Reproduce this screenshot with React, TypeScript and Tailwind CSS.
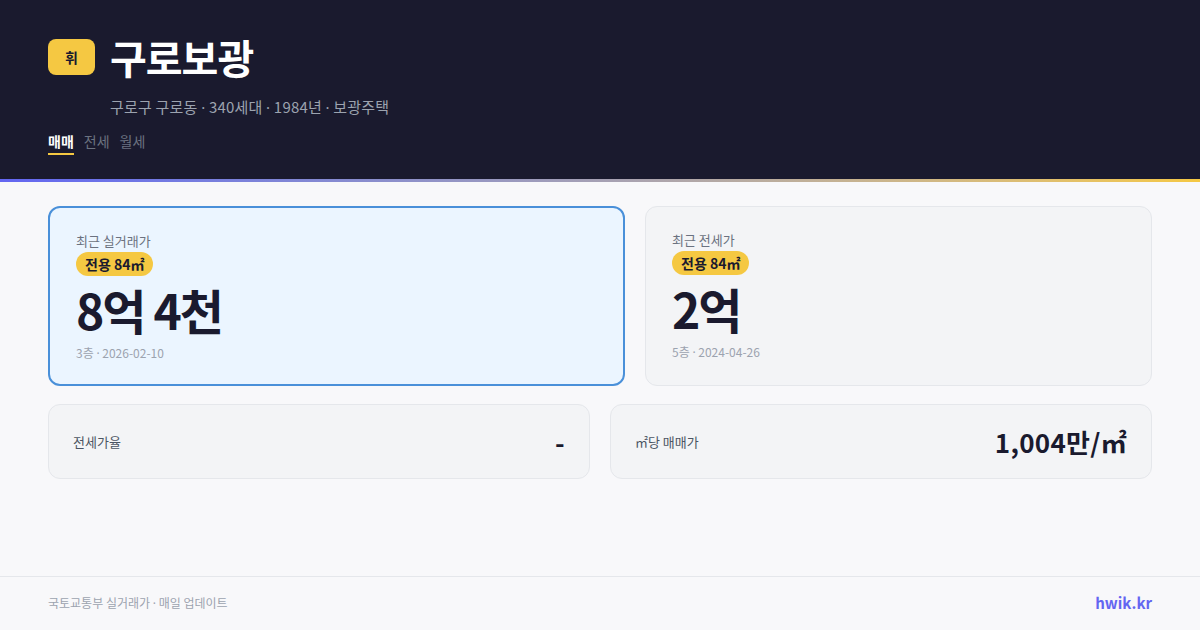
import React from 'react';

const font = { fontFamily: '"Noto Sans CJK KR", "Noto Sans", sans-serif' };

// Latin middle dot so the separator keeps its narrow width
const Dot = () => <span style={{ fontFamily: '"Noto Sans", sans-serif' }}>·</span>;

const PriceCard = ({ label, area, price, meta, active }: { label: string; area: string; price: string; meta: React.ReactNode; active?: boolean }) => (
  <div
    className={`rounded-xl px-[26px] pt-[24px] pb-[22px] ${
      active ? 'bg-[#ebf5ff] border-2 border-[#4a90d9]' : 'bg-[#f3f4f6] border border-[#e5e7eb]'
    }`}
  >
    <div className="text-[13px] text-[#6b7280] leading-[18px]">{label}</div>
    <div className="mt-[2px] inline-flex items-center h-6 px-[9px] rounded-full bg-[#f5c842] text-[14px] font-bold text-[#1a1a2e]">
      {area}
    </div>
    <div className="mt-[3px] text-[48px] font-bold leading-[60px] tracking-[-2px] text-[#1a1a2e]">{price}</div>
    <div className="mt-[6px] text-[12px] text-[#9ca3af] leading-[16px]">{meta}</div>
  </div>
);

const StatCard = ({ label, value }: { label: string; value: string }) => (
  <div className="h-[75px] rounded-xl bg-[#f3f4f6] border border-[#e5e7eb] px-6 flex items-center justify-between">
    <span className="text-[13px] text-[#4b5563]">{label}</span>
    <span className="text-[26px] font-bold tracking-[0.3px] text-[#1a1a2e]">{value}</span>
  </div>
);

export default function App() {
  return (
    <div className="w-[1200px] h-[630px] bg-[#f8f8fa] flex flex-col" style={font}>
      {/* Header */}
      <div className="h-[179px] bg-[#1a1a2e] px-12 pt-[35px]">
        <div className="flex items-center gap-[15px]">
          <div className="w-[47px] h-[36px] rounded-lg bg-[#f5c842] flex items-center justify-center text-[14px] font-bold text-[#1a1a2e]">
            휘
          </div>
          <h1 className="text-[40px] font-bold text-white leading-[44px] tracking-[-1px]">구로보광</h1>
        </div>
        <div className="mt-[17px] ml-[62px] text-[15px] text-[#9ca3af] leading-[22px] tracking-[0.2px]">
          구로구 구로동 <Dot /> 340세대 <Dot /> 1984년 <Dot /> 보광주택
        </div>
        <div className="mt-[13px] flex gap-[10px] text-[14px]">
          <div className="text-white font-bold border-b-2 border-[#f5c842] pb-[1px]">매매</div>
          <div className="text-[#6b7280]">전세</div>
          <div className="text-[#6b7280]">월세</div>
        </div>
      </div>
      <div className="h-[3px] bg-gradient-to-r from-[#6366f1] to-[#f5c842]" />

      {/* Body */}
      <div className="flex-1 px-12 pt-[24px]">
        <div className="grid grid-cols-[577fr_507fr] gap-5">
          <PriceCard label="최근 실거래가" area="전용 84㎡" price="8억 4천" meta={<>3층 <Dot /> 2026-02-10</>} active />
          <PriceCard label="최근 전세가" area="전용 84㎡" price="2억" meta={<>5층 <Dot /> 2024-04-26</>} />
        </div>
        <div className="mt-[18px] grid grid-cols-2 gap-5">
          <StatCard label="전세가율" value="-" />
          <StatCard label="㎡당 매매가" value="1,004만/㎡" />
        </div>
      </div>

      {/* Footer */}
      <div className="h-[54px] border-t border-[#e5e7eb] px-12 flex items-center justify-between">
        <span className="text-[12px] text-[#9ca3af]">
          국토교통부 실거래가 <Dot /> 매일 업데이트
        </span>
        <span className="text-[15px] font-bold text-[#6366f1]">hwik.kr</span>
      </div>
    </div>
  );
}
